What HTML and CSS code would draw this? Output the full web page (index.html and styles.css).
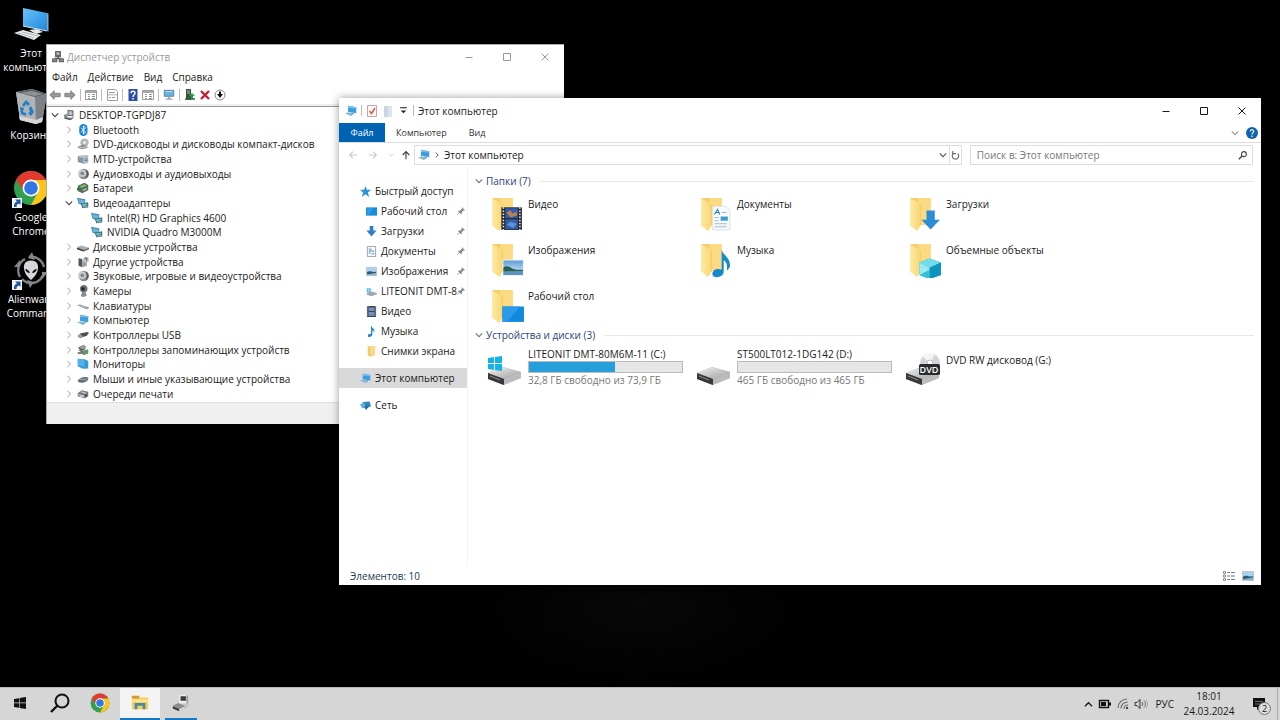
FILE: index.html
```html
<!DOCTYPE html>
<html lang="ru">
<head>
<meta charset="utf-8">
<title>Этот компьютер</title>
<link rel="stylesheet" href="styles.css">
</head>
<body>
<svg class="sprite" aria-hidden="true">
  <defs>
    <linearGradient id="scr" x1="0" y1="0" x2="1" y2="1"><stop offset="0" stop-color="#69c4fb"/><stop offset="1" stop-color="#1f86d9"/></linearGradient>
    <linearGradient id="fold" x1="0" y1="0" x2="1" y2="0"><stop offset="0" stop-color="#fde9a6"/><stop offset="1" stop-color="#fbd86f"/></linearGradient>
    <linearGradient id="metal" x1="0" y1="0" x2="1" y2="1"><stop offset="0" stop-color="#f4f4f4"/><stop offset="1" stop-color="#9c9c9c"/></linearGradient>
    <linearGradient id="sky" x1="0" y1="0" x2="0" y2="1"><stop offset="0" stop-color="#5b9bd8"/><stop offset="1" stop-color="#e2f1fb"/></linearGradient>
  </defs>
  <symbol id="pc" viewBox="0 0 36 36">
    <path d="M10 2 34 7v18L10 20z" fill="url(#scr)"/><path d="M34 7l1.500.5v18L34 25z" fill="#8fa9b8"/>
    <path d="M10 20l24 5" stroke="#d9e6ef" stroke-width="1"/>
    <path d="M16 24l8-1 6 3-7 2z" fill="#e4e8ea"/><path d="M1 27l9-3 18 5-7 5z" fill="#e9ecee"/><path d="M5 27l16 5M9 26l16 4" stroke="#9ba2a6" stroke-width=".8"/>
  </symbol>
  <symbol id="spc" viewBox="0 0 16 16"><path d="M4 1l11 2v8L4 9z" fill="#3b9ddd"/><path d="M4 1l11 2v1.500L4 4z" fill="#78bfeb"/><path d="M8 10l4 1-1 2-3-1z" fill="#7b98aa"/><path d="M0 11l5-1.500 6 2.500-3 3z" fill="#86b9dc"/></symbol>
  <symbol id="bin" viewBox="0 0 36 36">
    <path d="M3 4l16-3 15 5-5 28-6 2-16-4z" fill="#a3a8ac"/><path d="M3 4l19 5 1 27-16-4z" fill="#b0b4b7"/><path d="M22 9l12-3-5 28-6 2z" fill="#7b8185"/>
    <path d="M3 4l16-3 15 5-12 3z" fill="#5c6164"/><path d="M7 5l12-2 11 3-8 2z" fill="#8c9194"/><path d="M6 28l17 4 7-3-1 5-6 2-16-4z" fill="#d5d7d8"/>
    <path d="M9 17l4-5 4 4-2 2-2-2-2 3zM7 19l4 1-1 4 3 1v3l-5-2zM18 18l3 6-3 4-3-3 2-1-1-4z" fill="#1f7fcb"/>
  </symbol>
  <symbol id="chrome" viewBox="0 0 36 36">
    <circle cx="18" cy="18" r="17" fill="#2fa14f"/>
    <path d="M18 18L3.300 9.500A17 17 0 0 1 32.700 9.500L32 10H18z" fill="#e23b2e"/>
    <path d="M18 10h14.700A17 17 0 0 1 18 35l7-13z" fill="#fbc51c"/>
    <path d="M3.300 9.500l7.700 12.500 7-12z" fill="#e23b2e"/>
    <circle cx="18" cy="18" r="8.500" fill="#fff"/><circle cx="18" cy="18" r="6.800" fill="#2f78e6"/>
  </symbol>
  <symbol id="alien" viewBox="0 0 36 36">
    <g fill="none" stroke="#7e8286" stroke-width="2.400"><path d="M7 25A13 13 0 0 1 12 7"/><path d="M16 5A13 13 0 0 1 31 15"/><path d="M31 20A13 13 0 0 1 20 31"/><path d="M15 31a13 13 0 0 1-6-4"/></g>
    <path d="M1 15l6-7v7zM19 0l3 8-7-2zM35 20l-6 7v-7zM17 36l-3-8 7 2z" fill="#85898c"/>
    <path d="M18 8.500c6 0 7.500 4 7 8-.5 5-4 9-7 11.500-3-2.500-6.500-6.500-7-11.500-.5-4 1-8 7-8z" fill="#d4d6d7"/>
    <path d="M12.300 17c2 0 4.200 1.700 4.700 4-2.500 0-4.400-1.500-4.700-4zM23.700 17c-2 0-4.200 1.700-4.700 4 2.500 0 4.400-1.500 4.700-4z" fill="#111"/>
  </symbol>
  <symbol id="shortcut" viewBox="0 0 10 10"><path d="M0 0h10v10H0z" fill="#f3f6fa"/><path d="M3 1.500h5.500V7L7 5.500C5 6 4.500 7 4.500 9H2C1.500 6 3 4.500 5 3.500z" fill="#1e559d"/></symbol>
  <symbol id="devpc" viewBox="0 0 16 16"><path d="M6 1l8 1v8l-8-1z" fill="#666b6e"/><path d="M7.500 2.500l5 .7v5l-5-.7z" fill="#b9c3c9"/><path d="M1 8l5-2v5l8 1-4 3-8-2z" fill="#8a8e91"/><path d="M2 12l8 2 4-3" stroke="#35383a" fill="none"/></symbol>
  <symbol id="devbig" viewBox="0 0 20 20"><path d="M8 1h10v10H8z" fill="#eceded"/><path d="M9.500 2.500h6v5h-6z" fill="#383c3f"/><path d="M16 1l2 1v9h-2z" fill="#999"/><path d="M6 11l12-1 1 3-3 3-11-1z" fill="#c4c6c7"/><path d="M1 13l6-3 7 3v3l-6 3-7-3z" fill="#8a8d8f"/><path d="M1 14l7 3v2l-7-3z" fill="#2f3234"/><path d="M8 17l6-3v2l-6 3z" fill="#dadbdc"/></symbol>
  <symbol id="mgr" viewBox="0 0 16 16"><path d="M4 0h8v8H4z" fill="#66696b"/><path d="M6 2h4v3H6z" fill="#b9c0c4"/><path d="M8 7v3M3 10h10" stroke="#555" stroke-width="2"/><path d="M0 10h7v5H0zM9 10h7v5H9z" fill="#66696b"/><path d="M2 11.500h3v1H2zM11 11.500h3v1h-3z" fill="#ccc"/></symbol>
  <symbol id="bt" viewBox="0 0 16 16"><rect x="3" width="11" height="16" rx="5.500" fill="#1582dc"/><path d="M5.500 5l6 6L8.500 13.500v-11L11.500 5l-6 6" fill="none" stroke="#fff" stroke-width="1.200"/></symbol>
  <symbol id="disc" viewBox="0 0 16 16"><circle cx="10" cy="6" r="5.500" fill="#b2b6b9"/><circle cx="10" cy="6" r="2" fill="#eee"/><path d="M1 11l7-2 6 2v2l-7 2-6-2z" fill="#868b8e"/><path d="M1 11l6 2 7-2" stroke="#ddd" fill="none"/></symbol>
  <symbol id="mtd" viewBox="0 0 16 16"><path d="M1 4l7 1v9l-7-2z" fill="#8797a3"/><path d="M8 3h7v10l-7 2z" fill="#aebac3"/><path d="M3 3h8v3H3z" fill="#bec6cb"/><path d="M10 8h4M10 10h4" stroke="#67747d"/></symbol>
  <symbol id="speaker" viewBox="0 0 16 16"><circle cx="9" cy="8" r="7" fill="#8b8f92"/><circle cx="7" cy="7" r="5" fill="#c9cccd"/><circle cx="7" cy="7" r="2.500" fill="#888"/><path d="M12 3c3 3 3 7 0 10" stroke="#555" stroke-width="1.500" fill="none"/></symbol>
  <symbol id="batt" viewBox="0 0 16 16"><path d="M1 5l9-4 5 3v7l-8 4-6-3z" fill="#5b6d5d"/><path d="M3 6l7-3 3 2-7 3z" fill="#75bb6b"/><path d="M0 8h6v3H0z" fill="#31784a"/><path d="M8 11l5-2" stroke="#d0dcd0" stroke-width="1.500"/></symbol>
  <symbol id="gpu" viewBox="0 0 16 16"><path d="M0 1l11 2v9L2 9z" fill="#4a8fb2"/><path d="M2 3l8 1.500V9L3 7.500z" fill="#6db6d8"/><path d="M5 9l10-2v7l-8 1z" fill="#3f7480"/><path d="M7 10l6-1v2l-6 1z" fill="#73cfdb"/><path d="M8 13h6" stroke="#b7d9c8"/></symbol>
  <symbol id="hdd" viewBox="0 0 16 16"><path d="M0 8l6-2 10 3v2l-7 3-9-3z" fill="#aaaeb0"/><path d="M0 9l9 3v2l-9-3z" fill="#333"/><path d="M9 12l7-3v2l-7 3z" fill="#6e7274"/></symbol>
  <symbol id="other" viewBox="0 0 16 16"><path d="M2 3l5 1v11l-5-2z" fill="#54585a"/><path d="M7 6l6-2v9l-6 2z" fill="#989ea2"/><circle cx="12" cy="5" r="4" fill="#c5c9cb"/><path d="M10.500 4c0-2 3-2 3 0S12 5 12 7" fill="none" stroke="#333"/></symbol>
  <symbol id="cam" viewBox="0 0 16 16"><circle cx="9" cy="5" r="5" fill="#6f7376"/><circle cx="8" cy="5" r="2.500" fill="#282b2d"/><path d="M7 9h4l2 5-4 2-4-1z" fill="#888d90"/></symbol>
  <symbol id="kbd" viewBox="0 0 16 16"><path d="M0 7l4-1 12 4v1l-4 1z" fill="#7c8c97"/><path d="M2 7l10 3M5 7l8 3" stroke="#dbe1e5" stroke-width=".6"/></symbol>
  <symbol id="usb" viewBox="0 0 16 16"><path d="M4 6l9-2 3 1-3 4-9 3-2-2z" fill="#4c5053"/><path d="M0 9l5-2 3 3-5 2z" fill="#989da0"/></symbol>
  <symbol id="store" viewBox="0 0 16 16"><path d="M2 4l7-3 4 3-7 3z" fill="#929799"/><path d="M2 5l5 3 4-2M3 8l5 3" stroke="#444" stroke-width="1.500" fill="none"/><path d="M7 9l8-2v6l-7 2z" fill="#5f9a66"/><path d="M1 12h7" stroke="#555" stroke-width="2"/></symbol>
  <symbol id="mon" viewBox="0 0 16 16"><path d="M1 1l10 1 4 2v10L5 13 1 11z" fill="#319bdc"/><path d="M1 1l9 1v9L1 10z" fill="#54b1e9"/><path d="M5 13l8 1.500" stroke="#6e8796"/></symbol>
  <symbol id="mouse" viewBox="0 0 16 16"><path d="M1 10c2-3 8-6 14-4 1 5-5 7-9 7-3 0-5-1-5-3z" fill="#64717a"/><path d="M4 8l6 1 4-2" stroke="#b5c0c6" fill="none"/></symbol>
  <symbol id="prn" viewBox="0 0 16 16"><path d="M1 7l5-4 9 2v6l-5 3-9-3z" fill="#777b7e"/><path d="M5 5l7 2M2 9l8 2M4 11l5 1" stroke="#d7dadb" stroke-width="1.300"/><circle cx="12" cy="10" r="1.500" fill="#333"/></symbol>
  <symbol id="chev" viewBox="0 0 10 10"><path d="M3 1l4 4-4 4" fill="none" stroke="currentColor" stroke-width="1.200"/></symbol>
  <symbol id="chevd" viewBox="0 0 10 10"><path d="M1 3l4 4 4-4" fill="none" stroke="currentColor" stroke-width="1.400"/></symbol>
  <symbol id="min" viewBox="0 0 10 10"><path d="M1.500 5.500h7" stroke="currentColor"/></symbol>
  <symbol id="max" viewBox="0 0 10 10"><path d="M1.500 1.500h7v7h-7z" fill="none" stroke="currentColor"/></symbol>
  <symbol id="cls" viewBox="0 0 10 10"><path d="M1.500 1.500l7 7M8.500 1.500l-7 7" stroke="currentColor"/></symbol>
  <symbol id="arrow" viewBox="0 0 14 12"><path d="M1 6l5-5v3h7v4H6v3z" fill="#999" stroke="#777"/></symbol>
  <symbol id="thin" viewBox="0 0 12 12"><path d="M11 6H2M6 2L2 6l4 4" fill="none" stroke="currentColor" stroke-width="1.400"/></symbol>
  <symbol id="panel" viewBox="0 0 12 12"><path d="M.5 1.500h11v9H.5z" fill="#fff" stroke="#9b9fa2"/><path d="M1 2h10v2H1z" fill="#a4aab0"/><path d="M3 5.500h2M3 7.500h2M3 9.500h2" stroke="#999"/><path d="M7 5.500h3M7 7.500h3M7 9.500h3" stroke="#7aa981"/></symbol>
  <symbol id="prop" viewBox="0 0 12 12"><path d="M1.500.5h8l2 2v9h-10z" fill="#fff" stroke="#9b9fa2"/><path d="M3 3.500h6M3 8.500h2m1 0h3" stroke="#999"/><path d="M2 5h9v1.500H2z" fill="#c6cbd0"/></symbol>
  <symbol id="hlp" viewBox="0 0 12 12"><path d="M1.500 0h9v12h-9z" fill="#2c50a8"/><path d="M4 4.200C4 1.500 8 1.500 8 4.200 8 6 6 5.500 6 8" stroke="#fff" stroke-width="1.400" fill="none"/><path d="M5.300 9h1.400v1.500H5.300z" fill="#fff"/></symbol>
  <symbol id="scan" viewBox="0 0 14 12"><path d="M1.500.5h11v7h-11z" fill="#65b4e4" stroke="#527b96"/><path d="M6 8h2v2H6zM3 10h8v1.500H3z" fill="#9aa5ac"/><path d="M3 2l8 0" stroke="#c2e5f8"/></symbol>
  <symbol id="upd" viewBox="0 0 12 12"><path d="M2 0h5v11H2z" fill="#3b5144"/><path d="M3 2h3M3 4h3" stroke="#a8bcae"/><path d="M8 4l3 3H9v3H7V7H5z" fill="#28a443"/><path d="M1 10h10" stroke="#2c6e3a" stroke-width="1.500"/></symbol>
  <symbol id="redx" viewBox="0 0 12 12"><path d="M2 2l8 8M10 2l-8 8" stroke="#c81f30" stroke-width="2.400"/></symbol>
  <symbol id="dis" viewBox="0 0 12 12"><circle cx="6" cy="6" r="5" fill="#fff" stroke="#888"/><path d="M5 2.500h2V5h2L6 9 3 5h2z" fill="#111"/></symbol>
  <symbol id="check" viewBox="0 0 12 12"><path d="M1.500.5h9v11h-9z" fill="#fdf6f4" stroke="#b9adab"/><path d="M3.500 6l2 2.500L9 3" fill="none" stroke="#cf5b3c" stroke-width="1.400"/></symbol>
  <symbol id="page" viewBox="0 0 12 12"><path d="M2 1h8v11H2z" fill="#dce5ee"/><path d="M2 1h4v11H2z" fill="#c9d6e3"/></symbol>
  <symbol id="tri" viewBox="0 0 10 10"><path d="M2 2.500h6" stroke="#222"/><path d="M2.500 5h5L5 7.500z" fill="#222"/></symbol>
  <symbol id="help" viewBox="0 0 12 12"><circle cx="6" cy="6" r="6" fill="#0f62ac"/><path d="M4.300 4.600C4.300 2 7.700 2 7.700 4.600 7.700 6 6 5.800 6 7.500M6 8.500V10" stroke="#fff" stroke-width="1.200" fill="none"/></symbol>
  <symbol id="refresh" viewBox="0 0 12 12"><path d="M8.500 4A3.500 3.500 0 1 1 4 3.500M3 1v3h3.500" fill="none" stroke="#666" stroke-width="1.200"/></symbol>
  <symbol id="mag" viewBox="0 0 12 12"><circle cx="7.500" cy="4.500" r="2.700" fill="none" stroke="currentColor" stroke-width="1.200"/><path d="M5.500 6.500L2 10" stroke="currentColor" stroke-width="1.500"/></symbol>
  <symbol id="star" viewBox="0 0 12 12"><path d="M6 0l1.600 4H12L8.600 7 10 12 6 9l-4 3 1.400-5L0 4h4.400z" fill="#2e96d2"/></symbol>
  <symbol id="desk" viewBox="0 0 12 12"><path d="M0 1.500h12v9H0z" fill="#168bdc"/><path d="M1 2.500h7l-5 7H1z" fill="#2f9de8"/></symbol>
  <symbol id="down" viewBox="0 0 12 12"><path d="M4 0h4v5h3.500L6 11.500.5 5H4z" fill="#327fc8"/></symbol>
  <symbol id="doc" viewBox="0 0 12 12"><path d="M1.500.5h9v11h-9z" fill="#f5f8fb" stroke="#91a0ad"/><path d="M3 3.500h3M3 5.500h6M3 7.500h2M6 8.500h3" stroke="#4c83b5"/></symbol>
  <symbol id="pic" viewBox="0 0 12 12"><path d="M.5 1.500h11v9H.5z" fill="#a7d3ef" stroke="#b9c7d1"/><path d="M1 7c4-3 6 1 10-1v1.500L6 9 1 9z" fill="#34566f"/><path d="M1 9l10-1.500V10H1z" fill="#7fb4d4"/></symbol>
  <symbol id="sysdrv" viewBox="0 0 14 12"><path d="M1 2h5v5H1z" fill="#27b2e8"/><path d="M3.500 2v5M1 4.500h5" stroke="#fff" stroke-width=".6"/><path d="M1 8l6-2 7 2v1.500L7 12 1 10z" fill="#9eaab2"/></symbol>
  <symbol id="film" viewBox="0 0 12 12"><path d="M1 0h10v12H1z" fill="#3d4658"/><path d="M3 1.500h6v4H3zM3 6.500h6v4H3z" fill="#7590bd"/><path d="M2 0v12M10 0v12" stroke="#dde" stroke-width=".8" stroke-dasharray="1 1"/></symbol>
  <symbol id="note" viewBox="0 0 12 12"><path d="M6 0c1 3 4 3 3 7-.5-2-1.500-2-2-2.500V9c0 3-5 4-5 1.500C2 9 4 8 5.500 8.500V0z" fill="#2389c9"/></symbol>
  <symbol id="sfold" viewBox="0 0 12 12"><path d="M2 0h8v10L5 12 2 10z" fill="#f8db86"/><path d="M2 0l3 2v10L2 10z" fill="#efcd74"/></symbol>
  <symbol id="net" viewBox="0 0 16 16"><path d="M4 3l10-1 2 7-8 4-4-3z" fill="#3487bd"/><path d="M0 6l7-2v7l-4 1z" fill="#60afe0"/><path d="M7 9l6-1-4 7z" fill="#276c98"/></symbol>
  <symbol id="pin" viewBox="0 0 10 10"><path d="M6 0l4 4-1 .5-1 0-2 2v2l-1 .5L1.500 5.500 2 4.500h2l2-2v-1z" fill="#858c92"/><path d="M3.500 6.500L.5 9.500" stroke="#858c92"/></symbol>
  <symbol id="folder" viewBox="0 0 32 34"><path d="M1 1h20v26H8z" fill="#f6cd68"/><path d="M9 1h12v26H9z" fill="#fadb83"/><path d="M1 1l10 6v21l-3 5-7-5z" fill="url(#fold)"/><path d="M11 7v21" stroke="#edc25d" stroke-width=".6"/></symbol>
  <symbol id="f-video" viewBox="0 0 32 34"><use href="#folder"/><path d="M10 10h20v22H10z" fill="#262a35"/><path d="M14 11h12v9.500H14zM14 21.500h12V31H14z" fill="#315da9"/><path d="M15 15l4-2 2 3 4-2v4l-6 2z" fill="#bd8150"/><path d="M15 27l4-3 6 2-3 4z" fill="#5d93d2"/><path d="M12 10v22M28 10v22" stroke="#e6e6e6" stroke-width="1.500" stroke-dasharray="1.500 1.500"/></symbol>
  <symbol id="f-doc" viewBox="0 0 32 34"><use href="#folder"/><path d="M12 9h13l4 4v19H12z" fill="#f7fafc" stroke="#d3dce2" stroke-width=".8"/><path d="M14 17l3-5 2 5m-4-2h4" stroke="#247bb5" fill="none"/><path d="M20 19h7v4h-7z" fill="#399ec5"/><path d="M21 15h5M14 20h4M14 23h4M14 26h12M14 29h12" stroke="#a5bac7"/></symbol>
  <symbol id="f-down" viewBox="0 0 32 34"><use href="#folder"/><path d="M17 13h8v9h5L21 31.500 12 22h5z" fill="#2d8cd6"/></symbol>
  <symbol id="f-pic" viewBox="0 0 32 34"><use href="#folder"/><path d="M11.500 16.500h20v15h-20z" fill="url(#sky)" stroke="#eef3f6"/><path d="M12 24c3-3 7 0 9 1s5 1 10 1v2H12z" fill="#2b5f54"/><path d="M12 28l19-1v4H12z" fill="#5b93bf"/></symbol>
  <symbol id="f-music" viewBox="0 0 32 34"><use href="#folder"/><path d="M21 6c1 6 9 8 8 17-1 2-2 3-3 4 1-7-1-9-3-10v11c0 6-11 7-11 2 0-4 5-6 9-4z" fill="#158bcc"/></symbol>
  <symbol id="f-3d" viewBox="0 0 32 34"><use href="#folder"/><path d="M10 19l10-4 11 4v12l-11 4-10-4z" fill="#19b1d4"/><path d="M10 19l10-4 11 4-11 5z" fill="#70dced"/><path d="M10 19l10 5v11l-10-4z" fill="#9be8ef"/><path d="M10 31l10-5v9z" fill="#35bfd8"/><path d="M20 24l11-5v12l-11 4z" fill="#0c94bd"/></symbol>
  <symbol id="f-desk" viewBox="0 0 32 34"><use href="#folder"/><path d="M11 17h21v15H11z" fill="#1289dd"/><path d="M11 17h17L16 32h-5z" fill="#2a9bea"/></symbol>
  <symbol id="drive" viewBox="0 0 36 36"><path d="M1 22l15-6 18 5v6l-18 7L1 28z" fill="#aaa"/><path d="M1 22l15-6 18 5-17 7z" fill="url(#metal)"/><path d="M1 22l16 6v6L1 28z" fill="#363839"/><path d="M17 28l17-7v6l-17 7z" fill="#b9bbbc"/><path d="M3 25l10 4" stroke="#8c9092"/></symbol>
  <symbol id="d-sys" viewBox="0 0 36 36"><use href="#drive"/><path d="M1 7l6-1v6H1zM8 6l7-1v7H8zM1 13h6v6l-6-1zM8 13h7v7l-7-1z" fill="#14b3e8"/></symbol>
  <symbol id="d-dvd" viewBox="0 0 36 36"><circle cx="25" cy="12" r="10" fill="#d3d6d8"/><path d="M25 12L17 5c4-4 9-4 13-2z" fill="#f4f5f5"/><circle cx="25" cy="12" r="3" fill="#fff" stroke="#bbb"/><use href="#drive"/><rect x="14" y="13" width="21" height="11" rx="1.500" fill="#292c2e"/></symbol>
  <symbol id="vlist" viewBox="0 0 12 12"><path d="M.5 1.500h2v2h-2zM.5 5h2v2h-2zM.5 8.500h2v2h-2z" fill="none" stroke="#777" stroke-width=".8"/><path d="M4 2.500h3m1 0h4M4 6h3m1 0h4M4 9.500h3m1 0h4" stroke="#777"/></symbol>
  <symbol id="win" viewBox="0 0 12 12"><path d="M0 2l5-.8V5.600H0zM5.600 1L12 0v5.600H5.600zM0 6.300h5v4.500L0 10zM5.600 6.300H12V12l-6.400-1z" fill="#111"/></symbol>
  <symbol id="bigmag" viewBox="0 0 20 20"><circle cx="12" cy="8" r="6.500" fill="none" stroke="#111" stroke-width="2"/><path d="M7.500 12.500L1 19" stroke="#111" stroke-width="2.400"/></symbol>
  <symbol id="exp" viewBox="0 0 20 18"><path d="M1 1h8l1 2h9v13H1z" fill="#f5cf59"/><path d="M1 1h8v3H1z" fill="#cb9c35"/><path d="M1 5h18v3H1z" fill="#ffe28a"/><path d="M4 16V9h12v7h-3v-4H7v4z" fill="#4889a9"/></symbol>
  <symbol id="bat2" viewBox="0 0 14 12"><path d="M1.500 2.500h9v7h-9z" fill="none" stroke="#111" stroke-width="1.400"/><path d="M3 4h5v4H3zM11 4.500h2v3h-2z" fill="#111"/></symbol>
  <symbol id="wifi" viewBox="0 0 12 12"><path d="M1 10A9 9 0 0 1 10 1M4 10.500A6.500 6.500 0 0 1 10.500 4M7 11A4 4 0 0 1 11 7" fill="none" stroke="#666" stroke-width="1.100"/><circle cx="10" cy="10" r="1.200" fill="#444"/></symbol>
  <symbol id="vol" viewBox="0 0 14 12"><path d="M1 4.500h2L6 1.500v9L3 7.500H1z" fill="none" stroke="#333"/><path d="M8 4c1 1 1 3 0 4M10 2.500c2 2 2 5 0 7" fill="none" stroke="#666"/><path d="M12 1.500c2 3 2 6 0 9" fill="none" stroke="#aaa"/></symbol>
  <symbol id="msg" viewBox="0 0 12 12"><path d="M0 0h12v9H7l-3 3V9H0z" fill="#111"/><path d="M2 3.500h8M2 6h8" stroke="#888" stroke-width=".8"/></symbol>
</svg>

<main class="desktop">
  <nav class="shortcuts" aria-label="Рабочий стол">
    <a href="#pc"><span class="pic"><svg><use href="#pc"/></svg></span>Этот компьютер</a>
    <a href="#bin"><span class="pic"><svg><use href="#bin"/></svg></span>Корзина</a>
    <a href="#chrome"><span class="pic"><svg><use href="#chrome"/></svg><svg class="link"><use href="#shortcut"/></svg></span>Google Chrome</a>
    <a href="#alien"><span class="pic"><svg><use href="#alien"/></svg><svg class="link"><use href="#shortcut"/></svg></span>Alienware Command</a>
  </nav>

  <section class="window devices" aria-label="Диспетчер устройств">
    <header class="titlebar">
      <svg class="i12"><use href="#mgr"/></svg><h1>Диспетчер устройств</h1>
      <div class="controls"><button aria-label="Свернуть"><svg><use href="#min"/></svg></button><button aria-label="Развернуть"><svg><use href="#max"/></svg></button><button aria-label="Закрыть"><svg><use href="#cls"/></svg></button></div>
    </header>
    <div class="menubar"><button>Файл</button><button>Действие</button><button>Вид</button><button>Справка</button></div>
    <div class="toolbar">
      <button aria-label="Назад"><svg><use href="#arrow"/></svg></button><button aria-label="Вперёд"><svg class="flip"><use href="#arrow"/></svg></button><i></i>
      <button aria-label="Дерево"><svg><use href="#panel"/></svg></button><i></i>
      <button aria-label="Свойства"><svg><use href="#prop"/></svg></button><i></i>
      <button aria-label="Справка"><svg><use href="#hlp"/></svg></button><button aria-label="Панель"><svg><use href="#panel"/></svg></button><i></i>
      <button aria-label="Обновить конфигурацию"><svg><use href="#scan"/></svg></button><i></i>
      <button aria-label="Обновить драйвер"><svg><use href="#upd"/></svg></button><button aria-label="Удалить"><svg><use href="#redx"/></svg></button><button aria-label="Отключить"><svg><use href="#dis"/></svg></button>
    </div>
    <ul class="tree">
      <li class="root open"><svg class="tw"><use href="#chevd"/></svg><svg class="i12"><use href="#devpc"/></svg>DESKTOP-TGPDJ87</li>
      <li><svg class="tw"><use href="#chev"/></svg><svg class="i12"><use href="#bt"/></svg>Bluetooth</li>
      <li><svg class="tw"><use href="#chev"/></svg><svg class="i12"><use href="#disc"/></svg>DVD-дисководы и дисководы компакт-дисков</li>
      <li><svg class="tw"><use href="#chev"/></svg><svg class="i12"><use href="#mtd"/></svg>MTD-устройства</li>
      <li><svg class="tw"><use href="#chev"/></svg><svg class="i12"><use href="#speaker"/></svg>Аудиовходы и аудиовыходы</li>
      <li><svg class="tw"><use href="#chev"/></svg><svg class="i12"><use href="#batt"/></svg>Батареи</li>
      <li class="open"><svg class="tw"><use href="#chevd"/></svg><svg class="i12"><use href="#gpu"/></svg>Видеоадаптеры</li>
      <li class="leaf"><svg class="i12"><use href="#gpu"/></svg>Intel(R) HD Graphics 4600</li>
      <li class="leaf"><svg class="i12"><use href="#gpu"/></svg>NVIDIA Quadro M3000M</li>
      <li><svg class="tw"><use href="#chev"/></svg><svg class="i12"><use href="#hdd"/></svg>Дисковые устройства</li>
      <li><svg class="tw"><use href="#chev"/></svg><svg class="i12"><use href="#other"/></svg>Другие устройства</li>
      <li><svg class="tw"><use href="#chev"/></svg><svg class="i12"><use href="#speaker"/></svg>Звуковые, игровые и видеоустройства</li>
      <li><svg class="tw"><use href="#chev"/></svg><svg class="i12"><use href="#cam"/></svg>Камеры</li>
      <li><svg class="tw"><use href="#chev"/></svg><svg class="i12"><use href="#kbd"/></svg>Клавиатуры</li>
      <li><svg class="tw"><use href="#chev"/></svg><svg class="i12"><use href="#spc"/></svg>Компьютер</li>
      <li><svg class="tw"><use href="#chev"/></svg><svg class="i12"><use href="#usb"/></svg>Контроллеры USB</li>
      <li><svg class="tw"><use href="#chev"/></svg><svg class="i12"><use href="#store"/></svg>Контроллеры запоминающих устройств</li>
      <li><svg class="tw"><use href="#chev"/></svg><svg class="i12"><use href="#mon"/></svg>Мониторы</li>
      <li><svg class="tw"><use href="#chev"/></svg><svg class="i12"><use href="#mouse"/></svg>Мыши и иные указывающие устройства</li>
      <li><svg class="tw"><use href="#chev"/></svg><svg class="i12"><use href="#prn"/></svg>Очереди печати</li>
    </ul>
    <footer class="strip"></footer>
  </section>

  <section class="window explorer" aria-label="Этот компьютер">
    <header class="titlebar">
      <svg class="i12"><use href="#spc"/></svg><i></i>
      <button class="quick" aria-label="Свойства"><svg class="i12"><use href="#check"/></svg></button>
      <button class="quick" aria-label="Новая папка"><svg class="i12"><use href="#page"/></svg></button>
      <button class="quick" aria-label="Настроить"><svg class="i10"><use href="#tri"/></svg></button><i></i>
      <h1>Этот компьютер</h1>
      <div class="controls"><button aria-label="Свернуть"><svg><use href="#min"/></svg></button><button aria-label="Развернуть"><svg><use href="#max"/></svg></button><button aria-label="Закрыть"><svg><use href="#cls"/></svg></button></div>
    </header>
    <div class="ribbon">
      <button class="file">Файл</button><button>Компьютер</button><button>Вид</button>
      <span class="ribbon-end"><svg class="i8"><use href="#chevd"/></svg><svg class="i12"><use href="#help"/></svg></span>
    </div>
    <div class="address-row">
      <div class="history">
        <button disabled aria-label="Назад"><svg><use href="#thin"/></svg></button>
        <button disabled aria-label="Вперёд"><svg class="flip"><use href="#thin"/></svg></button>
        <button disabled class="slim" aria-label="Последние"><svg class="i6"><use href="#chevd"/></svg></button>
        <button class="slim" aria-label="Вверх"><svg class="up"><use href="#thin"/></svg></button>
      </div>
      <div class="path"><svg class="i12"><use href="#spc"/></svg><svg class="i6"><use href="#chev"/></svg><span>Этот компьютер</span>
        <button class="drop" aria-label="Список"><svg class="i8"><use href="#chevd"/></svg></button><button class="reload" aria-label="Обновить"><svg class="i10"><use href="#refresh"/></svg></button></div>
      <label class="search"><input type="search" placeholder="Поиск в: Этот компьютер" aria-label="Поиск"><svg class="i10"><use href="#mag"/></svg></label>
    </div>
    <div class="panes">
      <nav class="places" aria-label="Область переходов">
        <a class="top" href="#q"><svg class="i10"><use href="#star"/></svg>Быстрый доступ</a>
        <a href="#d"><svg class="i10"><use href="#desk"/></svg><span>Рабочий стол</span><svg class="pin"><use href="#pin"/></svg></a>
        <a href="#l"><svg class="i10"><use href="#down"/></svg><span>Загрузки</span><svg class="pin"><use href="#pin"/></svg></a>
        <a href="#o"><svg class="i10"><use href="#doc"/></svg><span>Документы</span><svg class="pin"><use href="#pin"/></svg></a>
        <a href="#i"><svg class="i10"><use href="#pic"/></svg><span>Изображения</span><svg class="pin"><use href="#pin"/></svg></a>
        <a href="#c"><svg class="i10"><use href="#sysdrv"/></svg><span>LITEONIT DMT-8</span><svg class="pin"><use href="#pin"/></svg></a>
        <a href="#v"><svg class="i10"><use href="#film"/></svg>Видео</a>
        <a href="#m"><svg class="i10"><use href="#note"/></svg>Музыка</a>
        <a href="#s"><svg class="i10"><use href="#sfold"/></svg>Снимки экрана</a>
        <a class="top apart current" href="#t"><svg class="i10"><use href="#spc"/></svg>Этот компьютер</a>
        <a class="top apart" href="#n"><svg class="i10"><use href="#net"/></svg>Сеть</a>
      </nav>
      <div class="content">
        <h2><svg class="i8"><use href="#chevd"/></svg>Папки (7)</h2>
        <div class="grid folders">
          <a href="#1"><svg><use href="#f-video"/></svg>Видео</a>
          <a href="#2"><svg><use href="#f-doc"/></svg>Документы</a>
          <a href="#3"><svg><use href="#f-down"/></svg>Загрузки</a>
          <a href="#4"><svg><use href="#f-pic"/></svg>Изображения</a>
          <a href="#5"><svg><use href="#f-music"/></svg>Музыка</a>
          <a href="#6"><svg><use href="#f-3d"/></svg>Объемные объекты</a>
          <a href="#7"><svg><use href="#f-desk"/></svg>Рабочий стол</a>
        </div>
        <h2><svg class="i8"><use href="#chevd"/></svg>Устройства и диски (3)</h2>
        <div class="grid drives">
          <a href="#8"><svg><use href="#d-sys"/></svg><span class="info"><span>LITEONIT DMT-80M6M-11 (C:)</span><progress max="100" value="56" aria-label="Занято на диске C"></progress><small>32,8 ГБ свободно из 73,9 ГБ</small></span></a>
          <a href="#9"><svg><use href="#drive"/></svg><span class="info"><span>ST500LT012-1DG142 (D:)</span><progress max="100" value="0" aria-label="Занято на диске D"></progress><small>465 ГБ свободно из 465 ГБ</small></span></a>
          <a href="#10"><svg viewBox="0 0 36 36"><use href="#d-dvd"/><text x="24" y="22" text-anchor="middle" class="dvd">DVD</text></svg><span class="info single">DVD RW дисковод (G:)</span></a>
        </div>
      </div>
    </div>
    <footer class="status"><span>Элементов: 10</span><button aria-label="Таблица"><svg class="i12"><use href="#vlist"/></svg></button><button aria-label="Эскизы"><svg class="i12"><use href="#pic"/></svg></button></footer>
  </section>
</main>

<footer class="taskbar">
  <button aria-label="Пуск"><svg class="i12"><use href="#win"/></svg></button>
  <button aria-label="Поиск"><svg class="i20"><use href="#bigmag"/></svg></button>
  <button aria-label="Google Chrome"><svg class="i20"><use href="#chrome"/></svg></button>
  <button class="active" aria-label="Проводник"><svg class="i18"><use href="#exp"/></svg></button>
  <button class="running" aria-label="Диспетчер устройств"><svg class="i18"><use href="#devbig"/></svg></button>
  <div class="tray">
    <svg class="i10 caret"><use href="#chevd"/></svg><svg class="i14"><use href="#bat2"/></svg><svg class="i12"><use href="#wifi"/></svg><svg class="i14"><use href="#vol"/></svg>
    <span class="lang">РУС</span>
    <time datetime="2024-03-24T18:01"><span>18:01</span><span>24.03.2024</span></time>
    <button class="notes" aria-label="Уведомления"><svg class="i14"><use href="#msg"/></svg><b>2</b></button>
    <i class="peek"></i>
  </div>
</footer>
</body>
</html>
```
FILE: styles.css
```css
* { box-sizing: border-box; }
html, body { height: 100%; }
body {
  margin: 0;
  display: flex;
  flex-direction: column;
  overflow: hidden;
  background: #000;
  color: #1a1a1a;
  font: 10px/14px "Open Sans", "Noto Sans", sans-serif;
}
button {
  display: flex;
  align-items: center;
  justify-content: center;
  margin: 0;
  padding: 0;
  border: 0;
  background: none;
  color: inherit;
  font: inherit;
}
a { color: inherit; text-decoration: none; }
h1, h2 { margin: 0; font: inherit; }
svg { flex: none; }
.sprite { position: absolute; width: 0; height: 0; }
.i6 { width: 6px; height: 6px; }
.i8 { width: 8px; height: 8px; }
.i10 { width: 11px; height: 11px; }
.i12 { width: 12px; height: 12px; }
.i14 { width: 14px; height: 12px; }
.i18 { width: 18px; height: 18px; }
.i20 { width: 20px; height: 20px; }
.flip { transform: scaleX(-1); }
.up { transform: rotate(90deg); }
.dvd { font: 600 9px "Open Sans", sans-serif; fill: #fff; }

.desktop {
  position: relative;
  flex: 1;
  min-height: 0;
  background: radial-gradient(ellipse 180px 90px at 50% 88%, #070707, #000);
}
.shortcuts { display: flex; flex-direction: column; width: 62px; padding-top: 6px; }
.shortcuts a {
  display: flex;
  flex-direction: column;
  align-items: center;
  gap: 4px;
  height: 82px;
  color: #fff;
  text-align: center;
}
.pic { position: relative; display: block; width: 38px; height: 36px; }
.pic svg { width: 38px; height: 36px; }
.pic .link { position: absolute; left: 0; bottom: -2px; width: 10px; height: 10px; }

.window { position: absolute; display: flex; flex-direction: column; background: #fff; }
.devices { left: 46px; top: 44px; width: 518px; height: 380px; border: 1px solid #aaa; border-width: 1px 0 0 1px; }
.explorer { left: 339px; right: 19px; top: 98px; bottom: 102px; box-shadow: 0 0 8px #0006; }

.titlebar { display: flex; align-items: center; height: 25px; padding-left: 6px; }
.titlebar i { width: 1px; height: 11px; background: #bbb; }
.controls { display: flex; margin-left: auto; }
.controls button { width: 38px; height: 22px; }
.controls svg { width: 10px; height: 10px; }

.devices .titlebar { gap: 3px; height: 23px; padding-left: 5px; color: #999; }
.menubar { display: flex; gap: 10px; height: 18px; padding-left: 5px; }
.toolbar { display: flex; align-items: center; gap: 3px; height: 20px; padding-left: 2px; border-bottom: 2px solid #eee; }
.toolbar svg { width: 12px; height: 12px; }
.toolbar i { width: 1px; height: 12px; margin: 0 1px; background: #bbb; }
.tree {
  display: flex;
  flex: 1;
  flex-direction: column;
  justify-content: space-between;
  margin: 0;
  padding: 1px 0;
  border-top: 1px solid #999;
  list-style: none;
}
.tree li { display: flex; align-items: center; gap: 4px; padding-left: 18px; }
.tree .root { padding-left: 4px; }
.tree .leaf { padding-left: 44px; }
.tw { width: 8px; height: 8px; color: #999; }
.open .tw { color: #444; }
.strip { height: 22px; border-top: 1px solid #ddd; background: #f0f0f0; }

.explorer .titlebar { gap: 4px; }
.explorer .controls button { height: 25px; }
.explorer h1 { flex: 1; }
.ribbon { display: flex; height: 20px; border-bottom: 1px solid #ddd; color: #333; font-size: 9px; }
.ribbon button { padding: 0 11px; }
.ribbon .file { width: 46px; background: #0063b1; color: #fff; }
.ribbon-end { display: flex; align-items: center; gap: 7px; margin-left: auto; padding-right: 3px; color: #999; }
.address-row { display: flex; height: 23px; padding: 2px 8px 1px 4px; }
.history { display: flex; width: 71px; }
.history button { width: 20px; color: #444; }
.history button:disabled { color: #ccc; }
.history .slim { width: 15px; }
.history svg { width: 10px; height: 10px; }
.history .i6 { width: 6px; height: 6px; }
.path { display: flex; flex: 2; align-items: center; gap: 4px; padding-left: 3px; border: 1px solid #ddd; }
.path span { flex: 1; }
.drop, .reload { width: 12px; height: 100%; color: #555; }
.drop { margin-right: -4px; }
.reload { border-left: 1px solid #ddd; }
.search { display: flex; flex: 1; align-items: center; margin-left: 8px; padding: 0 4px 0 6px; border: 1px solid #ddd; color: #444; }
.search input { flex: 1; min-width: 0; padding: 0; border: 0; outline: 0; background: none; font: inherit; }
.search input::placeholder { color: #777; }

.panes { display: flex; flex: 1; min-height: 0; }
.places { width: 129px; padding-top: 15px; border-right: 1px solid #f2f2f2; }
.places a { display: flex; align-items: center; gap: 4px; height: 20px; padding-left: 27px; white-space: nowrap; }
.places .top { padding-left: 21px; }
.places .apart { margin-top: 7px; }
.places .current { background: #d9d9d9; }
.places span { flex: 1; min-width: 0; }
.pin { width: 8px; height: 8px; margin-right: 2px; margin-left: -4px; }
.content { flex: 1; padding: 7px 7px 0; }
.content h2 { display: flex; align-items: center; gap: 3px; height: 16px; color: #2c3f7d; }
.content h2::after { content: ""; flex: 1; height: 1px; margin-left: 6px; background: #e8e8e8; }
.content h2 svg { color: #777; }
.grid { display: grid; grid-template-columns: repeat(auto-fill, 209px); }
.grid a { display: flex; gap: 4px; }
.folders { grid-auto-rows: 46px; padding: 8px 0 0 16px; }
.folders svg { width: 33px; height: 35px; }
.folders a { height: 38px; }
.folders { height: 138px; }
.drives { padding: 4px 0 0 12px; }
.drives a { gap: 5px; }
.drives svg { width: 36px; height: 36px; margin-top: 4px; }
.info { display: flex; flex-direction: column; width: 155px; white-space: nowrap; }
.single { padding-top: 6px; }
.info small { color: #777; font-size: 10px; }
progress { display: block; appearance: none; width: 100%; height: 12px; border: 1px solid #bbb; background: #e6e6e6; }
progress::-webkit-progress-bar { background: #e6e6e6; }
progress::-webkit-progress-value { background: #26a0da; }
.status { display: flex; align-items: center; gap: 7px; height: 19px; padding: 0 7px 0 11px; color: #1e395b; }
.status span { flex: 1; }

.taskbar { display: flex; height: 33px; border-top: 1px solid #bbb; background: #d6d6d6; }
.taskbar > button { width: 40px; border-bottom: 2px solid transparent; }
.taskbar .active { border-color: #1778c6; background: #f3f3f3; }
.taskbar .running { width: 32px; margin-left: 5px; border-color: #1778c6; }
.tray { display: flex; align-items: center; gap: 5px; margin-left: auto; padding-right: 2px; }
.caret { width: 9px; transform: rotate(180deg); }
.lang { margin-left: 3px; }
.tray time { display: flex; flex-direction: column; align-items: center; width: 60px; line-height: 15px; }
.notes { position: relative; margin: 0 6px 0 8px; }
.notes b {
  position: absolute;
  left: 6px;
  top: 4px;
  width: 13px;
  height: 13px;
  border: 1px solid #777;
  border-radius: 50%;
  background: #ddd;
  font: 9px/11px "Open Sans", sans-serif;
}
.peek { width: 1px; height: 100%; background: #aaa; }
```
